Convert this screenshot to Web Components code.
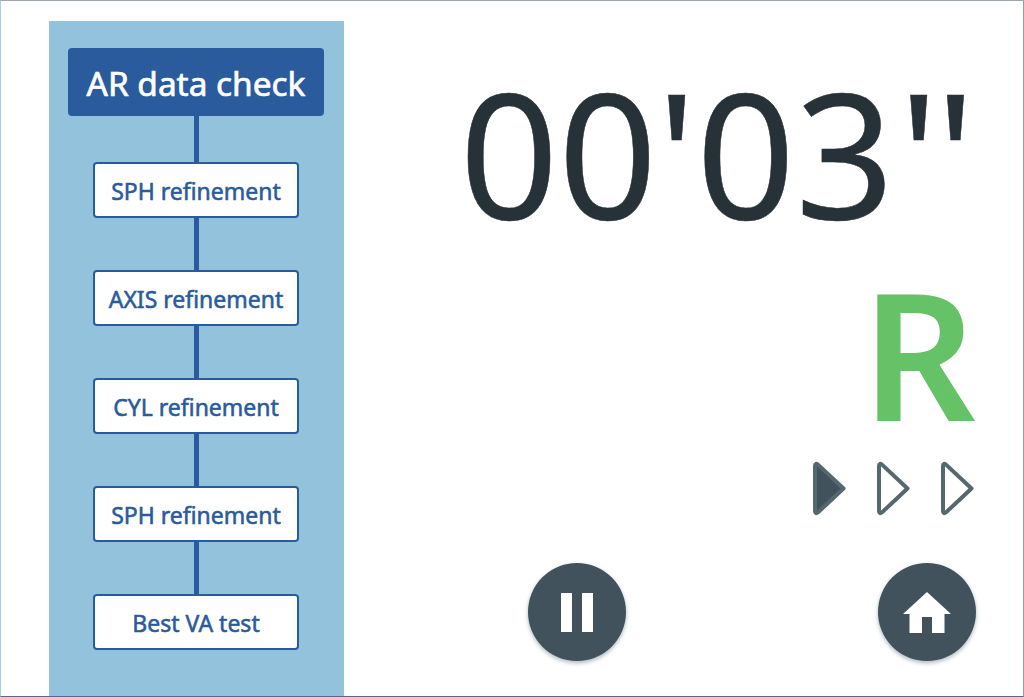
<!DOCTYPE html>
<html>
<head>
<meta charset="utf-8">
<title>Refraction test</title>
<style>
  html, body { margin: 0; height: 100%; background: #fff; }
  body { font-family: "Noto Sans", "Open Sans", sans-serif; overflow: hidden; }
</style>
</head>
<body>
<test-screen>
  <step-rail slot="rail">
    <step-node active>AR data check</step-node>
    <step-node>SPH refinement</step-node>
    <step-node>AXIS refinement</step-node>
    <step-node>CYL refinement</step-node>
    <step-node>SPH refinement</step-node>
    <step-node>Best VA test</step-node>
  </step-rail>
  <test-status slot="main" minutes="00" seconds="03" eye="R" progress="1" total="3"></test-status>
</test-screen>

<script>
// ---- Page frame ----
class TestScreen extends HTMLElement {
  constructor() {
    super();
    this.attachShadow({ mode: 'open' }).innerHTML = `
      <style>
        :host {
          display: flex;
          box-sizing: border-box;
          width: 1024px;
          height: 697px;
          padding: 20px 0 0 48px;
          border-top: 1px solid #9aa7ab;
          border-left: 1px solid #a5cfe0;
          border-right: 1px solid #8fa3ab;
          border-bottom: 1px solid #3f6db3;
        }
        ::slotted([slot="rail"]) { flex: 0 0 295px; }
        ::slotted([slot="main"]) { flex: 1; min-width: 0; }
      </style>
      <slot name="rail"></slot>
      <slot name="main"></slot>
    `;
  }
}

// ---- Left column of test steps ----
class StepRail extends HTMLElement {
  constructor() {
    super();
    this.attachShadow({ mode: 'open' }).innerHTML = `
      <style>
        :host {
          display: flex;
          flex-direction: column;
          align-items: center;
          gap: 52px;
          box-sizing: border-box;
          padding: 27px 1px 0 0;
          background: #93c2dd;
        }
        ::slotted(step-node:first-child) { margin-bottom: -6px; }
      </style>
      <slot></slot>
    `;
  }
}

class StepNode extends HTMLElement {
  constructor() {
    super();
    this.attachShadow({ mode: 'open' }).innerHTML = `
      <style>
        :host {
          position: relative;
          display: flex;
          align-items: center;
          justify-content: center;
          box-sizing: border-box;
          width: 206px;
          height: 56px;
          padding-top: 1px;
          background: #fff;
          border: 2px solid #2a5b9c;
          border-radius: 4px;
          color: #2a5b9c;
          font-size: 23px;
          -webkit-text-stroke: 0.55px currentColor;
          white-space: nowrap;
        }
        :host([active]) {
          width: 256px;
          height: 68px;
          padding-top: 2px;
          background: #2a5b9c;
          color: #fff;
          font-size: 33.4px;
          -webkit-text-stroke: 0.7px currentColor;
        }
        /* connector up to the previous step, the first gap is shorter */
        :host(:not(:first-child))::before {
          content: "";
          position: absolute;
          left: 50%;
          bottom: 100%;
          width: 5px;
          height: 54px;
          margin-left: -2.5px;
          background: #2a5b9c;
        }
        :host(:nth-child(2))::before { height: 48px; }
      </style>
      <slot></slot>
    `;
  }
}

// ---- Right side: timer, eye, progress, buttons ----
class TestStatus extends HTMLElement {
  constructor() {
    super();
    const total = Number(this.getAttribute('total'));
    const done = Number(this.getAttribute('progress'));
    let arrows = '';
    for (let i = 0; i < total; i++) {
      arrows += `<svg width="34" height="55" viewBox="0 0 34 55">
        <path d="M3 5 Q3 1.6 6 3.6 L31.5 27.5 L6 51.4 Q3 53.4 3 50 Z" fill="${i < done ? '#41525c' : '#fff'}" stroke="#56686f" stroke-width="4" stroke-linejoin="round"/>
      </svg>`;
    }
    this.attachShadow({ mode: 'open' }).innerHTML = `
      <style>
        :host {
          display: flex;
          flex-direction: column;
          align-items: flex-end;
          box-sizing: border-box;
          padding: 0 47px 0 0;
          color: #263238;
        }
        .time {
          height: 235px;
          margin-right: 3px;
          font-size: 173px;
          line-height: 262px;
          white-space: nowrap;
          -webkit-text-stroke: 0.5px currentColor;
        }
        .quotes { letter-spacing: -2px; margin-left: 5px; }
        .eye {
          height: 184px;
          margin-top: 4px;
          color: #66c266;
          font-size: 178px;
          font-weight: 600;
          line-height: 184px;
        }
        .arrows { display: flex; gap: 30px; margin-top: 17px; margin-right: 2px; }
        .buttons {
          display: flex;
          justify-content: space-between;
          align-self: stretch;
          margin-top: 47px;
          padding-left: 184px;
        }
      </style>
      <div class="time">${this.getAttribute('minutes')}'${this.getAttribute('seconds')}<span class="quotes">''</span></div>
      <div class="eye">${this.getAttribute('eye')}</div>
      <div class="arrows">${arrows}</div>
      <div class="buttons">
        <round-button>
          <svg width="32" height="39" viewBox="0 0 32 39"><path d="M0 0h11v39H0zM21 0h11v39H21z" fill="#fff"/></svg>
        </round-button>
        <round-button>
          <svg width="48" height="41" viewBox="0 0 48 41"><path d="M24 0 L48 22 H41.5 V41 H29 V25 H19 V41 H6.5 V22 H0 Z" fill="#fff"/></svg>
        </round-button>
      </div>
    `;
  }
}

class RoundButton extends HTMLElement {
  constructor() {
    super();
    this.attachShadow({ mode: 'open' }).innerHTML = `
      <style>
        :host {
          display: flex;
          align-items: center;
          justify-content: center;
          width: 98px;
          height: 98px;
          border-radius: 50%;
          background: #41525c;
          box-shadow: 0 2px 4px rgba(69, 100, 110, 0.45);
        }
      </style>
      <slot></slot>
    `;
  }
}

customElements.define('test-screen', TestScreen);
customElements.define('step-rail', StepRail);
customElements.define('step-node', StepNode);
customElements.define('test-status', TestStatus);
customElements.define('round-button', RoundButton);
</script>
</body>
</html>
